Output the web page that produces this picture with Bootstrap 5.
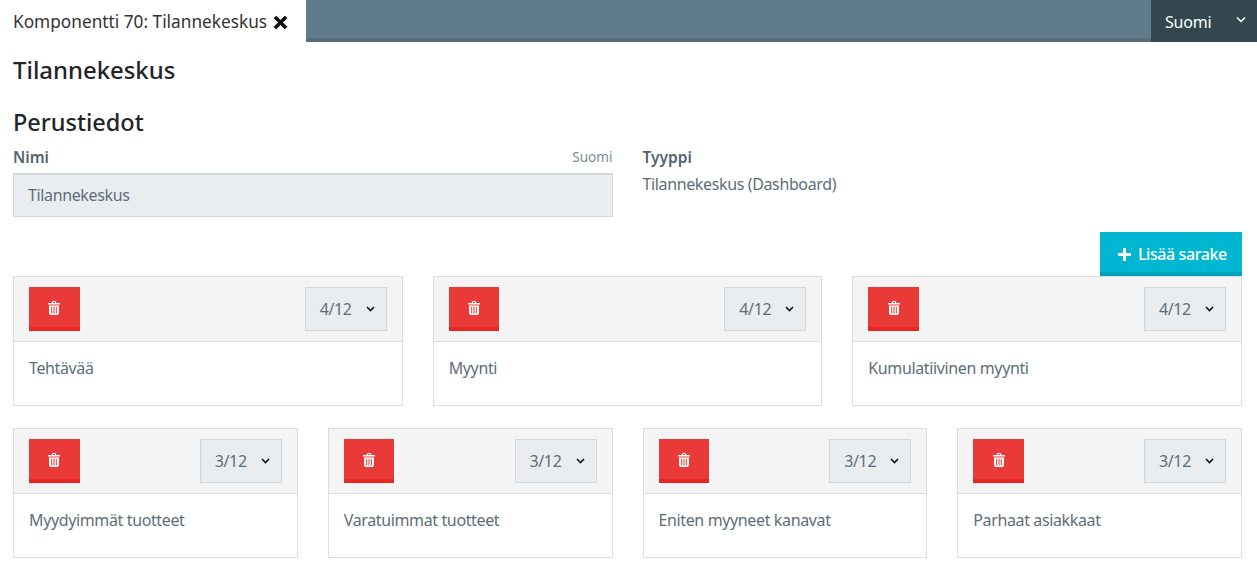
<!DOCTYPE html>
<html lang="fi">
<head>
<meta charset="utf-8">
<title>Tilannekeskus</title>
<link href="https://cdn.jsdelivr.net/npm/bootstrap@5.3.0/dist/css/bootstrap.min.css" rel="stylesheet">
<style>
html, body { overflow: hidden; }
body { font-family: "Noto Sans", "Open Sans", sans-serif; font-size: 16px; letter-spacing: -0.37px; color: #5e6e79; background: #fff; }
.topbar { height: 42px; background: #607b8a; border-bottom: 4px solid #566e7b; }
.tab-active { width: 306px; height: 42px; padding-left: 13px; background: #fff; color: #333; font-size: 17.25px; letter-spacing: 0; line-height: 44px; white-space: nowrap; }
.tab-active svg { width: 15px; height: 15px; margin-left: 1px; vertical-align: -2px; }
.lang-btn { width: 106px; height: 42px; background: #33474f; color: #fff; padding: 2px 0 0 14px; line-height: 24px; font-size: 16px; letter-spacing: -0.2px; }
.lang-btn svg { width: 10px; height: 7px; margin-right: 11px; margin-top: -6px; }
.page-body { padding: 0 15px 0 13px; }
.title-a { font-size: 23.9px; font-weight: 500; letter-spacing: 0; color: #212529; margin: 13px 0 0; line-height: 30px; }
.title-b { font-size: 23.5px; font-weight: 500; letter-spacing: 0; color: #212529; margin: 21px 0 0; line-height: 33px; }
.info-row { margin-top: 6px; }
.name-col { width: 599.5px; }
.type-col { margin-left: 30px; }
.field-label { font-weight: 600; font-size: 15.5px; letter-spacing: 0; color: #54646f; line-height: 24px; }
.lang-hint { font-size: 13.6px; letter-spacing: 0; color: #7c8c96; line-height: 24px; }
.name-input { height: 44px; width: 600px; margin-top: 4px; background: #e9edf0; border: 1px solid #d0d8de; border-top-width: 2px; border-radius: 0; padding: 0 14px; line-height: 41px; }
.type-value { margin-top: 3px; line-height: 24px; }
.add-row { margin-top: 15px; }
.add-btn { height: 44px; width: 142px; background: #00b6d0; color: #fff; border: 0; border-bottom: 4px solid #00a3ba; border-radius: 0; padding: 4px 0 0 3px; font-weight: 500; font-size: 16px; letter-spacing: -0.4px; }
.add-btn svg { width: 13px; height: 13px; margin-right: 3px; vertical-align: -1px; }
.cols-row { --bs-gutter-x: 30px; --bs-gutter-y: 0; }
.col-box { border: 1px solid #dcdfe1; background: #fff; border-radius: 0; margin-bottom: 22px; height: 130px; }
.col-head { height: 65px; background: #f4f4f4; border-bottom: 1px solid #dcdfe1; padding: 10px 15px 0; }
.del-btn { width: 50.6px; height: 44px; background: #e93a38; border: 0; border-bottom: 4px solid #e62623; border-radius: 0; padding: 0; }
.del-btn svg { width: 14px; height: 16px; display: block; margin: 1px auto 0; }
.size-sel { width: 82px; height: 44px; background: #e9edf0; border: 1px solid #d0d8de; padding-left: 14px; line-height: 42px; }
.size-sel svg { width: 9px; height: 6px; margin-right: 11px; margin-top: -1px; }
.col-text { padding: 14px 15px 0; line-height: 24px; }
</style>
</head>
<body>
<nav class="topbar d-flex justify-content-between align-items-start">
  <div class="tab-active">Komponentti 70: Tilannekeskus <svg viewBox="0 0 14 14"><path d="M3 1 7 5 11 1 13 3 9 7 13 11 11 13 7 9 3 13 1 11 5 7 1 3Z" fill="#111" stroke="#111" stroke-width=".8" stroke-linejoin="round"/></svg></div>
  <div class="lang-btn d-flex justify-content-between align-items-center"><span>Suomi</span><svg viewBox="0 0 10 7"><path d="M1 1.500 5 5.500 9 1.500" fill="none" stroke="#fff" stroke-width="1.500"/></svg></div>
</nav>
<main class="page-body">
  <h1 class="title-a">Tilannekeskus</h1>
  <h2 class="title-b">Perustiedot</h2>
  <div class="info-row d-flex">
    <div class="name-col">
      <div class="d-flex justify-content-between"><span class="field-label">Nimi</span><span class="lang-hint">Suomi</span></div>
      <div class="name-input">Tilannekeskus</div>
    </div>
    <div class="type-col">
      <div class="field-label">Tyyppi</div>
      <div class="type-value">Tilannekeskus (Dashboard)</div>
    </div>
  </div>
  <div class="add-row d-flex justify-content-end">
    <button class="btn add-btn"><svg viewBox="0 0 13 13"><path d="M5 0H8V5H13V8H8V13H5V8H0V5H5Z" fill="#fff"/></svg> Lisää sarake</button>
  </div>
  <div class="row cols-row">
    <div class="col-4"><div class="col-box"><div class="col-head d-flex justify-content-between"><button class="btn del-btn"><svg viewBox="0 0 14 16"><path d="M4.500 3 5.500 1H8.500L9.500 3H13V4.500H1V3ZM6 2 5.700 3H8.300L8 2ZM2 5.500H12V13.500L10.800 15H3.200L2 13.500ZM4.200 7V13.500H5.200V7ZM6.500 7V13.500H7.500V7ZM8.800 7V13.500H9.800V7Z" fill="#fff" fill-rule="evenodd"/></svg></button><div class="size-sel d-flex justify-content-between align-items-center"><span>4/12</span><svg viewBox="0 0 9 6"><path d="M1 1 4.500 4.500 8 1" fill="none" stroke="#111" stroke-width="1.600"/></svg></div></div><div class="col-text">Tehtävää</div></div></div>
    <div class="col-4"><div class="col-box"><div class="col-head d-flex justify-content-between"><button class="btn del-btn"><svg viewBox="0 0 14 16"><path d="M4.500 3 5.500 1H8.500L9.500 3H13V4.500H1V3ZM6 2 5.700 3H8.300L8 2ZM2 5.500H12V13.500L10.800 15H3.200L2 13.500ZM4.200 7V13.500H5.200V7ZM6.500 7V13.500H7.500V7ZM8.800 7V13.500H9.800V7Z" fill="#fff" fill-rule="evenodd"/></svg></button><div class="size-sel d-flex justify-content-between align-items-center"><span>4/12</span><svg viewBox="0 0 9 6"><path d="M1 1 4.500 4.500 8 1" fill="none" stroke="#111" stroke-width="1.600"/></svg></div></div><div class="col-text">Myynti</div></div></div>
    <div class="col-4"><div class="col-box"><div class="col-head d-flex justify-content-between"><button class="btn del-btn"><svg viewBox="0 0 14 16"><path d="M4.500 3 5.500 1H8.500L9.500 3H13V4.500H1V3ZM6 2 5.700 3H8.300L8 2ZM2 5.500H12V13.500L10.800 15H3.200L2 13.500ZM4.200 7V13.500H5.200V7ZM6.500 7V13.500H7.500V7ZM8.800 7V13.500H9.800V7Z" fill="#fff" fill-rule="evenodd"/></svg></button><div class="size-sel d-flex justify-content-between align-items-center"><span>4/12</span><svg viewBox="0 0 9 6"><path d="M1 1 4.500 4.500 8 1" fill="none" stroke="#111" stroke-width="1.600"/></svg></div></div><div class="col-text">Kumulatiivinen myynti</div></div></div>
    <div class="col-3"><div class="col-box"><div class="col-head d-flex justify-content-between"><button class="btn del-btn"><svg viewBox="0 0 14 16"><path d="M4.500 3 5.500 1H8.500L9.500 3H13V4.500H1V3ZM6 2 5.700 3H8.300L8 2ZM2 5.500H12V13.500L10.800 15H3.200L2 13.500ZM4.200 7V13.500H5.200V7ZM6.500 7V13.500H7.500V7ZM8.800 7V13.500H9.800V7Z" fill="#fff" fill-rule="evenodd"/></svg></button><div class="size-sel d-flex justify-content-between align-items-center"><span>3/12</span><svg viewBox="0 0 9 6"><path d="M1 1 4.500 4.500 8 1" fill="none" stroke="#111" stroke-width="1.600"/></svg></div></div><div class="col-text">Myydyimmät tuotteet</div></div></div>
    <div class="col-3"><div class="col-box"><div class="col-head d-flex justify-content-between"><button class="btn del-btn"><svg viewBox="0 0 14 16"><path d="M4.500 3 5.500 1H8.500L9.500 3H13V4.500H1V3ZM6 2 5.700 3H8.300L8 2ZM2 5.500H12V13.500L10.800 15H3.200L2 13.500ZM4.200 7V13.500H5.200V7ZM6.500 7V13.500H7.500V7ZM8.800 7V13.500H9.800V7Z" fill="#fff" fill-rule="evenodd"/></svg></button><div class="size-sel d-flex justify-content-between align-items-center"><span>3/12</span><svg viewBox="0 0 9 6"><path d="M1 1 4.500 4.500 8 1" fill="none" stroke="#111" stroke-width="1.600"/></svg></div></div><div class="col-text">Varatuimmat tuotteet</div></div></div>
    <div class="col-3"><div class="col-box"><div class="col-head d-flex justify-content-between"><button class="btn del-btn"><svg viewBox="0 0 14 16"><path d="M4.500 3 5.500 1H8.500L9.500 3H13V4.500H1V3ZM6 2 5.700 3H8.300L8 2ZM2 5.500H12V13.500L10.800 15H3.200L2 13.500ZM4.200 7V13.500H5.200V7ZM6.500 7V13.500H7.500V7ZM8.800 7V13.500H9.800V7Z" fill="#fff" fill-rule="evenodd"/></svg></button><div class="size-sel d-flex justify-content-between align-items-center"><span>3/12</span><svg viewBox="0 0 9 6"><path d="M1 1 4.500 4.500 8 1" fill="none" stroke="#111" stroke-width="1.600"/></svg></div></div><div class="col-text">Eniten myyneet kanavat</div></div></div>
    <div class="col-3"><div class="col-box"><div class="col-head d-flex justify-content-between"><button class="btn del-btn"><svg viewBox="0 0 14 16"><path d="M4.500 3 5.500 1H8.500L9.500 3H13V4.500H1V3ZM6 2 5.700 3H8.300L8 2ZM2 5.500H12V13.500L10.800 15H3.200L2 13.500ZM4.200 7V13.500H5.200V7ZM6.500 7V13.500H7.500V7ZM8.800 7V13.500H9.800V7Z" fill="#fff" fill-rule="evenodd"/></svg></button><div class="size-sel d-flex justify-content-between align-items-center"><span>3/12</span><svg viewBox="0 0 9 6"><path d="M1 1 4.500 4.500 8 1" fill="none" stroke="#111" stroke-width="1.600"/></svg></div></div><div class="col-text">Parhaat asiakkaat</div></div></div>
  </div>
</main>
<script src="https://cdn.jsdelivr.net/npm/bootstrap@5.3.0/dist/js/bootstrap.bundle.min.js"></script>
</body>
</html>
